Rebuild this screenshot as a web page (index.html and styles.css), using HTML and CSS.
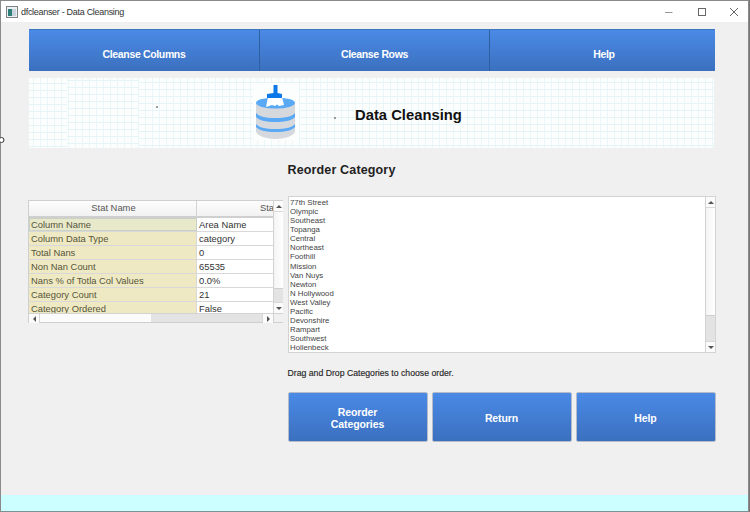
FILE: index.html
```html
<!DOCTYPE html>
<html lang="en">
<head>
<meta charset="utf-8">
<title>dfcleanser - Data Cleansing</title>
<link rel="stylesheet" href="styles.css">
</head>
<body>
<div class="window">
  <header class="titlebar">
    <svg class="appicon" width="12" height="12" viewBox="0 0 12 12"><rect x="0.5" y="0.5" width="11" height="11" fill="#eef2f2" stroke="#7b8588"/><rect x="2" y="3" width="4" height="7" fill="#2f7f78"/><rect x="6" y="3" width="4" height="7" fill="#c8d4dc"/></svg>
    <span class="wintitle">dfcleanser - Data Cleansing</span>
    <div class="winctrls">
      <svg width="10" height="10" viewBox="0 0 10 10"><path d="M0 5.500H7.500" stroke="#9a9a9a" fill="none"/></svg>
      <svg width="10" height="10" viewBox="0 0 10 10"><rect x="1.500" y="1.500" width="7" height="7" stroke="#666" fill="none"/></svg>
      <svg width="10" height="10" viewBox="0 0 10 10"><path d="M1 1L9 9M9 1L1 9" stroke="#666" fill="none"/></svg>
    </div>
  </header>
  <main class="content">
    <nav class="navbar">
      <button class="navbtn">Cleanse Columns</button>
      <button class="navbtn">Cleanse Rows</button>
      <button class="navbtn">Help</button>
    </nav>
    <section class="banner">
      <svg class="logo" width="46" height="57" viewBox="0 0 46 57">
        <rect width="46" height="57" fill="#fcfefe"/>
        <path d="M3 20V48C3 52 11.500 56 22.500 56S42 52 42 48V20Z" fill="#d5d8dd"/>
        <ellipse cx="22.500" cy="20" rx="19.500" ry="5.500" fill="#5aa9f5"/>
        <path d="M3 30C5 33 12 35 22.500 35S40 33 42 30V34C40 37 32 39 22.500 39S5 37 3 34Z" fill="#5aa9f5"/>
        <path d="M3 41C5 44 12 46 22.500 46S40 44 42 41V44C40 47 32 49 22.500 49S5 47 3 44Z" fill="#5aa9f5"/>
        <path d="M15 14H29L31 22L26 23L24 21.500L22 23L19 22L13 24Z" fill="#fff"/>
        <path d="M20.500 2H24.500V10L29 11V15H14V11L20.500 10Z" fill="#0d79e8"/>
      </svg>
      <h1 class="bannertitle">Data Cleansing</h1>
    </section>
    <div class="columns">
      <div class="statsgrid">
        <div class="statsview">
          <div class="statshead"><span class="hcell hname">Stat Name</span><span class="hcell hval">Stat Value</span></div>
          <div class="statrow selected"><span class="cname">Column Name</span><span class="cval">Area Name</span></div>
          <div class="statrow"><span class="cname">Column Data Type</span><span class="cval">category</span></div>
          <div class="statrow"><span class="cname">Total Nans</span><span class="cval">0</span></div>
          <div class="statrow"><span class="cname">Non Nan Count</span><span class="cval">65535</span></div>
          <div class="statrow"><span class="cname">Nans % of Totla Col Values</span><span class="cval">0.0%</span></div>
          <div class="statrow"><span class="cname">Category Count</span><span class="cval">21</span></div>
          <div class="statrow"><span class="cname">Category Ordered</span><span class="cval">False</span></div>
        </div>
        <div class="vscroll statsv">
          <span class="arrowbox"><i class="tri up"></i></span>
          <span class="track"><b class="thumb statsthumb"></b></span>
          <span class="arrowbox"><i class="tri down"></i></span>
        </div>
        <div class="hscroll">
          <span class="arrowbox h"><i class="tri left"></i></span>
          <span class="htrack"><b class="hthumb"></b></span>
          <span class="arrowbox h"><i class="tri right"></i></span>
        </div>
        <div class="corner"></div>
      </div>
      <div class="rightcol">
        <h2 class="formtitle">Reorder Category</h2>
        <div class="listbox">
          <ul class="catlist">
            <li>77th Street</li><li>Olympic</li><li>Southeast</li><li>Topanga</li><li>Central</li><li>Northeast</li><li>Foothill</li><li>Mission</li><li>Van Nuys</li><li>Newton</li><li>N Hollywood</li><li>West Valley</li><li>Pacific</li><li>Devonshire</li><li>Rampart</li><li>Southwest</li><li>Hollenbeck</li>
          </ul>
          <div class="vscroll listv">
            <span class="arrowbox"><i class="tri up"></i></span>
            <span class="track"><b class="thumb listthumb"></b></span>
            <span class="arrowbox"><i class="tri down"></i></span>
          </div>
        </div>
        <p class="note">Drag and Drop Categories to choose order.</p>
        <div class="actions">
          <button class="actionbtn">Reorder<br>Categories</button>
          <button class="actionbtn">Return</button>
          <button class="actionbtn">Help</button>
        </div>
      </div>
    </div>
  </main>
  <div class="statusstrip"></div>
  <svg class="cursor" width="6" height="8" viewBox="0 0 6 8"><circle cx="1.500" cy="4" r="2.500" fill="#fff" stroke="#333"/></svg>
</div>
</body>
</html>
```
FILE: styles.css
```css
* { box-sizing: border-box; }
html, body { margin: 0; padding: 0; }
body { width: 750px; height: 512px; overflow: hidden; background: #777; font-family: "Liberation Sans", Arial, sans-serif; }
.window { position: relative; width: 749px; height: 512px; border: 1px solid #8a8a8a; border-bottom: 1px solid #7e9090; background: #f0f0f0; display: flex; flex-direction: column; }
.titlebar { height: 21px; flex: none; background: #fff; display: flex; align-items: center; padding-left: 5px; }
.appicon { flex: none; }
.wintitle { margin-left: 3px; font-size: 9px; letter-spacing: -0.3px; color: #333; }
.winctrls { margin-left: auto; display: flex; gap: 22px; padding-right: 9px; align-items: center; }
.content { flex: 1; padding: 7px 33px 0 28px; display: flex; flex-direction: column; }
.navbar { height: 42px; flex: none; display: grid; grid-template-columns: 231px 230px 225px; border-top: 1px solid #3f76bd; }
.navbtn { border: 0; border-right: 1px solid #2f5f9f; padding: 6px 0 0; background: linear-gradient(#4a8ae6, #3b70bf); color: #fff; font: bold 10.500px "Liberation Sans", Arial, sans-serif; letter-spacing: -0.35px; }
.navbtn:last-child { border-right: 0; padding-left: 3px; }
.banner { margin-top: 7px; height: 70px; flex: none; display: flex; align-items: flex-start; padding-left: 224px; width: 685px;
  background-color: #fcfefe;
  background-repeat: no-repeat;
  background-image:
    radial-gradient(circle at 128px 29px, #777 0 0.6px, transparent 1px),
    radial-gradient(circle at 306px 40px, #777 0 0.6px, transparent 1px),
    repeating-linear-gradient(180deg, transparent 0 5px, #e4f4f7 5px 6px, transparent 6px 7px),
    repeating-linear-gradient(180deg, transparent 0 2px, #e4f4f7 2px 3px, transparent 3px 7px),
    repeating-linear-gradient(180deg, transparent 0 4px, #e4f4f7 4px 5px, transparent 5px 7px),
    repeating-linear-gradient(90deg, transparent 0 4px, #eaf6f8 4px 5px, transparent 5px 7px);
  background-size: 100% 100%, 100% 100%, 38px 100%, 72px 100%, 100% 100%, 100% 100%;
  background-position: 0 0, 0 0, 0 0, 38px 0, 110px 0, 0 0; }
.logo { flex: none; margin-top: 5px; }
.bannertitle { margin: 28px 0 0 56px; font-size: 14.800px; line-height: 18px; font-weight: bold; color: #111; }
.columns { display: grid; grid-template-columns: 255px 428.500px; column-gap: 4.500px; flex: 1; align-items: start; margin-left: -1px; }
.statsgrid { margin-top: 52px; width: 255px; height: 123px; border: 1px solid #cfcfcf; display: grid; grid-template-columns: 244px 10px; grid-template-rows: 112px 9px; background: #fff; }
.statsview { overflow: hidden; font-size: 9.400px; color: #55553a; }
.statshead { display: flex; height: 17px; border-bottom: 2px solid #cfcfcf; background: linear-gradient(#fdfdfd, #f1f1f1); color: #555; line-height: 14px; }
.hcell { display: block; overflow: hidden; white-space: nowrap; text-align: center; }
.hname { width: 168px; flex: none; border-right: 1px solid #d3d3d3; padding-left: 2px; }
.hval { width: 76px; flex: none; padding-left: 63px; text-align: left; }
.statrow { display: flex; height: 14px; line-height: 13px; border-bottom: 1px solid #d8d8d8; }
.cname { width: 168px; flex: none; background: #efe9c3; padding-left: 2px; border-right: 1px solid #d8d8d8; white-space: nowrap; }
.cval { width: 76px; flex: none; padding-left: 2px; color: #333; }
.selected .cname { background: #e8e8ca; outline: 1px solid #c9d0c4; outline-offset: -1px; }
.vscroll { display: flex; flex-direction: column; border-left: 1px solid #d3d3d3; background: #fbfbfb; }
.arrowbox { display: flex; align-items: center; justify-content: center; flex: none; height: 10px; background: #fbfbfb; }
.arrowbox.h { width: 10px; height: 9px; }
.track { flex: 1; display: flex; flex-direction: column; justify-content: flex-end; border-top: 1px solid #d8d8d8; border-bottom: 1px solid #d8d8d8; background: linear-gradient(90deg, #f4f4f4, #fff); }
.thumb { display: block; background: #e3e3e3; border-top: 1px solid #cfcfcf; }
.statsthumb { height: 14px; }
.listthumb { height: 26px; }
.tri { display: block; width: 0; height: 0; border: 3px solid transparent; }
.tri.up { border-bottom-color: #555; border-top-width: 0; }
.tri.down { border-top-color: #555; border-bottom-width: 0; }
.tri.left { border-right-color: #555; border-left-width: 0; }
.tri.right { border-left-color: #555; border-right-width: 0; }
.hscroll { display: flex; border-top: 1px solid #d3d3d3; background: #fbfbfb; }
.htrack { flex: 1; display: flex; border-left: 1px solid #d8d8d8; border-right: 1px solid #d8d8d8; background: #fbfbfb; }
.hthumb { display: block; margin-left: 111px; flex: 1; background: #e3e3e3; }
.corner { background: #f0f0f0; border-top: 1px solid #d3d3d3; border-left: 1px solid #d3d3d3; }
.rightcol { display: flex; flex-direction: column; }
.formtitle { margin: 15px 0 0; height: 33px; font-size: 12.500px; line-height: 15px; font-weight: bold; color: #222; letter-spacing: 0.15px; }
.listbox { height: 157px; display: flex; background: #fff; border: 1px solid #d3d3d3; }
.catlist { list-style: none; margin: 0; padding: 1px 0 0 1.500px; flex: 1; font-size: 7.800px; line-height: 9.080px; color: #444; overflow: hidden; }
.listv { width: 10px; flex: none; }
.note { margin: 15px 0 0; height: 24px; font-size: 8.700px; line-height: 10px; color: #222; font-weight: normal; -webkit-text-stroke: 0.15px #333; }
.actions { display: grid; grid-template-columns: repeat(3, 140px); column-gap: 4px; }
.actionbtn { height: 50px; border: 1px solid #b4bcc8; border-radius: 2px; padding: 2px 0 0; background: linear-gradient(#4a8ae6, #3b70bf); color: #fff; font: bold 10.500px/12px "Liberation Sans", Arial, sans-serif; letter-spacing: -0.1px; }
.statusstrip { height: 16px; flex: none; background: #ccffff; }
.cursor { position: absolute; left: -1px; top: 135px; }
```
